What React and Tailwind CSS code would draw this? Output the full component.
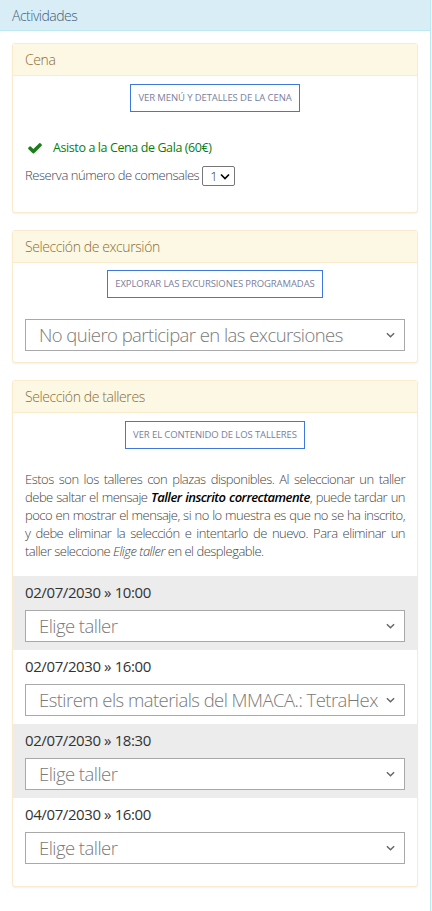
import { useState } from "react";

const font = { fontFamily: '"Open Sans", "Liberation Sans", sans-serif' };

function Chevron({ className }) {
  return (
    <svg viewBox="0 0 10 6" className={className} fill="none" stroke="currentColor" strokeWidth="1.6">
      <path d="M1 1l4 4 4-4" />
    </svg>
  );
}

function BigSelect({ value, options, onChange }) {
  return (
    <div className="relative">
      <select
        value={value}
        onChange={(e) => onChange(e.target.value)}
        className="w-full h-[32px] appearance-none bg-white border border-[#a9a9a9] pl-[13px] pr-[18px] text-[18.5px] font-light tracking-[-0.55px] leading-[30px] text-[#7a7a7a] outline-none"
        style={font}
      >
        {options.map((o) => (
          <option key={o}>{o}</option>
        ))}
      </select>
      <Chevron className="pointer-events-none absolute right-[10px] top-[13px] w-[9px] h-[6px] text-[#666]" />
    </div>
  );
}

function OutlineButton({ children }) {
  return (
    <div className="flex justify-center">
      <button className="h-[28px] px-[7px] border-[1.5px] border-[#3f78d8] bg-white text-[9.5px] uppercase text-[#7a80a0] tracking-[-0.1px]">
        {children}
      </button>
    </div>
  );
}

function Panel({ title, children }) {
  return (
    <div className="border border-[#faebcc] rounded-[3px] shadow-[0_1px_2px_rgba(0,0,0,0.06)] bg-white">
      <div className="h-[32px] flex items-center px-3 bg-[#fcf8e3] border-b border-[#faebcc] text-[#8a6d3b] text-[14px] font-light tracking-[-0.4px]">
        {title}
      </div>
      {children}
    </div>
  );
}

const slots = [
  { date: "02/07/2030 » 10:00", value: "Elige taller" },
  { date: "02/07/2030 » 16:00", value: "Estirem els materials del MMACA.: TetraHex" },
  { date: "02/07/2030 » 18:30", value: "Elige taller" },
  { date: "04/07/2030 » 16:00", value: "Elige taller" },
];

export default function App() {
  const [comensales, setComensales] = useState("1");
  const [excursion, setExcursion] = useState("No quiero participar en las excursiones");
  const [talleres, setTalleres] = useState(slots.map((s) => s.value));

  return (
    <div className="w-[432px] min-h-[911px] bg-white" style={font}>
      <div className="border-r border-b border-[#bce8f1] w-[431px]">
        {/* Outer heading */}
        <div className="h-[31px] flex items-center px-3 bg-[#d9edf7] border-b border-[#bce8f1] text-[#3b5f78] text-[14px] font-light tracking-[-0.5px]">
          Actividades
        </div>

        <div className="px-3 pt-3 pb-[28px] flex flex-col gap-[17px]">
          {/* Cena */}
          <Panel title="Cena">
            <div className="pt-2 pb-[26px] px-3">
              <OutlineButton>Ver menú y detalles de la cena</OutlineButton>
              <div className="mt-[27px] flex items-center gap-[10px] pl-[2px]">
                <svg viewBox="0 0 1792 1792" className="w-[16px] h-[16px] text-[#1b7d1b]" fill="currentColor">
                  <path d="M1671 566q0 40-28 68l-724 724-136 136q-28 28-68 28t-68-28l-136-136-362-362q-28-28-28-68t28-68l136-136q28-28 68-28t68 28l294 295 656-657q28-28 68-28t68 28l136 136q28 28 28 68z" />
                </svg>
                <span className="text-[12.5px] tracking-[-0.4px] text-[#0a7d0a]">Asisto a la Cena de Gala (60€)</span>
              </div>
              <div className="mt-[8px] flex items-center gap-[3px] text-[13px] font-light tracking-[-0.45px] text-[#3f3f55]">
                <span>Reserva número de comensales</span>
                <div className="relative">
                  <select
                    value={comensales}
                    onChange={(e) => setComensales(e.target.value)}
                    className="appearance-none h-[20px] w-[33px] border border-[#767676] rounded-[2px] bg-white pl-[7px] text-[13px] font-light text-[#333] outline-none"
                    style={font}
                  >
                    {["1", "2", "3", "4"].map((n) => (
                      <option key={n}>{n}</option>
                    ))}
                  </select>
                  <Chevron className="pointer-events-none absolute right-[5px] top-[7px] w-[10px] h-[7px] text-black" />
                </div>
              </div>
            </div>
          </Panel>

          {/* Excursión */}
          <Panel title="Selección de excursión">
            <div className="pt-[7px] pb-[11px] px-3">
              <OutlineButton>Explorar las excursiones programadas</OutlineButton>
              <div className="mt-[21px]">
                <BigSelect
                  value={excursion}
                  onChange={setExcursion}
                  options={["No quiero participar en las excursiones"]}
                />
              </div>
            </div>
          </Panel>

          {/* Talleres */}
          <Panel title="Selección de talleres">
            <div className="pt-2 pb-[14px]">
              <div className="px-3">
                <OutlineButton>Ver el contenido de los talleres</OutlineButton>
                <p className="mt-[21px] text-[13px] font-light tracking-[-0.5px] leading-[18px] text-[#444] text-justify">
                  Estos son los talleres con plazas disponibles. Al seleccionar un taller debe saltar el mensaje{" "}
                  <b className="italic font-semibold text-black">Taller inscrito correctamente</b>, puede tardar un poco en
                  mostrar el mensaje, si no lo muestra es que no se ha inscrito, y debe eliminar la selección e intentarlo de
                  nuevo. Para eliminar un taller seleccione <i>Elige taller</i> en el desplegable.
                </p>
              </div>
              <div className="mt-[16px]">
                {slots.map((s, i) => (
                  <div key={s.date} className={`px-3 pt-[5px] pb-[8px] ${i % 2 === 0 ? "bg-[#ececec]" : "bg-white"}`}>
                    <div className="h-[22px] flex items-center text-[15px] font-medium tracking-[-0.4px] text-[#333]">{s.date}</div>
                    <div className="mt-[7px]">
                      <BigSelect
                        value={talleres[i]}
                        onChange={(v) => setTalleres((prev) => prev.map((t, j) => (j === i ? v : t)))}
                        options={s.value === "Elige taller" ? ["Elige taller"] : ["Elige taller", s.value]}
                      />
                    </div>
                  </div>
                ))}
              </div>
            </div>
          </Panel>
        </div>
      </div>
    </div>
  );
}
